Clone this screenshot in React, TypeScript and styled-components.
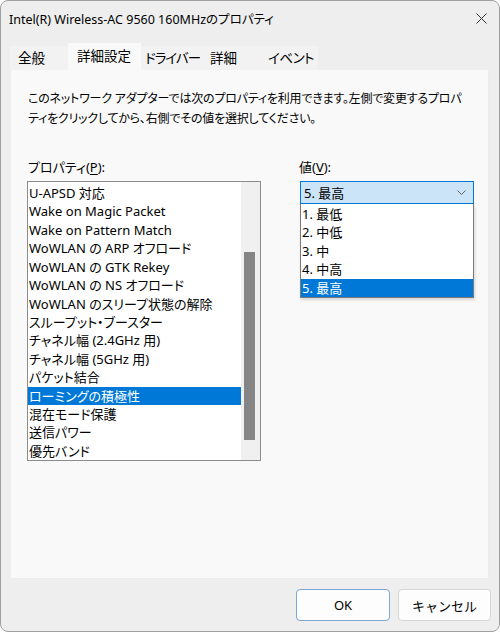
import styled, { createGlobalStyle } from "styled-components";

const Global = createGlobalStyle`
  html, body {
    margin: 0;
    padding: 0;
    background: #ffffff;
  }
  body {
    font-family: "Noto Sans", "Noto Sans CJK JP", sans-serif;
    font-feature-settings: "palt";
    color: #000000;
  }
`;

const Window = styled.div`
  width: 500px;
  height: 632px;
  box-sizing: border-box;
  border: 1px solid #a0a0a0;
  border-radius: 8px;
  background: #eeeeee;
  display: flex;
  flex-direction: column;
  overflow: hidden;
`;

const TitleBar = styled.div`
  height: 34px;
  display: flex;
  align-items: center;
  justify-content: space-between;
  padding: 0 12px 0 8px;
  font-size: 12.5px;
`;

const CloseIcon = () => (
  <svg width="11" height="11" viewBox="0 0 11 11">
    <path d="M0.5 0.5 L10.5 10.5 M10.5 0.5 L0.5 10.5" stroke="#333" strokeWidth="1" fill="none" />
  </svg>
);

const TabRow = styled.div`
  margin-top: 8px;
  padding-left: 9px;
  display: flex;
  align-items: flex-end;
  height: 27px;
`;

const Tab = styled.div<{ $w: number; $pl: number; $ls: number; $active?: boolean }>`
  width: ${(p) => p.$w}px;
  padding-left: ${(p) => p.$pl}px;
  letter-spacing: ${(p) => p.$ls}px;
  box-sizing: border-box;
  height: ${(p) => (p.$active ? 27 : 24)}px;
  line-height: ${(p) => (p.$active ? 26 : 24)}px;
  background: ${(p) => (p.$active ? "#f9f9f9" : "#f2f2f2")};
  font-size: 13.5px;
  white-space: nowrap;
`;

const Panel = styled.div`
  flex: 1;
  margin: 0 10px 0 9px;
  background: #f9f9f9;
  border: 1px solid #ececec;
  border-top: none;
  padding: 19px 16px 0 16px;
  display: flex;
  flex-direction: column;
`;

const Description = styled.p`
  margin: 0 0 28px 1px;
  font-size: 12px;
  line-height: 20px;
  letter-spacing: -0.2px;
  white-space: nowrap;
`;

const Columns = styled.div`
  display: grid;
  grid-template-columns: 234px 37px 176px;
`;

const Column = styled.div`
  display: flex;
  flex-direction: column;
`;

const Label = styled.div`
  font-size: 13px;
  line-height: 18px;
  height: 18px;
  margin: 1px 0 5px;
  padding-left: 1px;
  u {
    text-underline-offset: 2px;
  }
`;

const ListBox = styled.div`
  height: 280px;
  box-sizing: border-box;
  border: 1px solid #8c8c8c;
  background: #ffffff;
  display: flex;
`;

const ListItems = styled.div`
  flex: 1;
  padding-top: 2px;
`;

const Item = styled.div<{ $selected?: boolean }>`
  height: 18.43px;
  line-height: 19px;
  padding-left: 1px;
  font-size: 13px;
  white-space: nowrap;
  background: ${(p) => (p.$selected ? "#0078d7" : "transparent")};
  color: ${(p) => (p.$selected ? "#ffffff" : "#000000")};
`;

const ScrollTrack = styled.div`
  width: 19px;
  background: #f0f0f0;
  position: relative;
`;

const ScrollThumb = styled.div`
  position: absolute;
  left: 3px;
  width: 11px;
  top: 70px;
  height: 188px;
  background: #858585;
`;

const ComboWrap = styled.div`
  position: relative;
  margin-left: 2px;
`;

const Combo = styled.div`
  height: 23px;
  box-sizing: border-box;
  border: 1px solid #0078d7;
  background: #cce4f7;
  display: flex;
  align-items: center;
  justify-content: space-between;
  padding: 0 7px 0 3px;
  font-size: 13px;
`;

const Dropdown = styled.div`
  position: absolute;
  top: 23px;
  left: 0;
  right: 0;
  padding-top: 1px;
  background: #ffffff;
  border: 1px solid #7a7a7a;
  border-top: none;
  box-shadow: 1px 2px 3px rgba(0, 0, 0, 0.15);
`;

const Chevron = () => (
  <svg width="9" height="6" viewBox="0 0 9 6">
    <polyline points="0.5,0.5 4.5,4.5 8.5,0.5" stroke="#606060" strokeWidth="1" fill="none" />
  </svg>
);

const Footer = styled.div`
  height: 52px;
  display: flex;
  justify-content: flex-end;
  align-items: flex-start;
  gap: 8px;
  padding: 10px 8px 0 0;
  box-sizing: border-box;
`;

const Button = styled.button<{ $default?: boolean; $w: number }>`
  width: ${(p) => p.$w}px;
  height: 32px;
  border-radius: 4px;
  background: #fdfdfd;
  border: 1px solid ${(p) => (p.$default ? "#7fa6d0" : "#d6d6d6")};
  font-family: "Noto Sans", "Noto Sans CJK JP", sans-serif;
  font-size: 13px;
  color: #000;
  padding: 0;
`;

const tabs = [
  { label: "全般", w: 58, pl: 8, ls: 0 },
  { label: "詳細設定", w: 73, pl: 9, ls: 0, active: true },
  { label: "ドライバー", w: 59, pl: 4, ls: -1 },
  { label: "詳細", w: 60, pl: 10, ls: 0 },
  { label: "イベント", w: 58, pl: 8, ls: -0.5 },
];

const properties = [
  "U-APSD 対応",
  "Wake on Magic Packet",
  "Wake on Pattern Match",
  "WoWLAN の ARP オフロード",
  "WoWLAN の GTK Rekey",
  "WoWLAN の NS オフロード",
  "WoWLAN のスリープ状態の解除",
  "スループット・ブースター",
  "チャネル幅 (2.4GHz 用)",
  "チャネル幅 (5GHz 用)",
  "パケット結合",
  "ローミングの積極性",
  "混在モード保護",
  "送信パワー",
  "優先バンド",
];

const values = ["1. 最低", "2. 中低", "3. 中", "4. 中高", "5. 最高"];

export default function App() {
  return (
    <>
      <Global />
      <Window>
        <TitleBar>
          <span>Intel(R) Wireless-AC 9560 160MHzのプロパティ</span>
          <CloseIcon />
        </TitleBar>
        <TabRow>
          {tabs.map((t) => (
            <Tab key={t.label} $w={t.w} $pl={t.pl} $ls={t.ls} $active={t.active}>
              {t.label}
            </Tab>
          ))}
        </TabRow>
        <Panel>
          <Description>
            このネットワーク アダプターでは次のプロパティを利用できます。左側で変更するプロパ
            <br />
            ティをクリックしてから、右側でその値を選択してください。
          </Description>
          <Columns>
            <Column>
              <Label>
                プロパティ(<u>P</u>):
              </Label>
              <ListBox>
                <ListItems>
                  {properties.map((p) => (
                    <Item key={p} $selected={p === "ローミングの積極性"}>
                      {p}
                    </Item>
                  ))}
                </ListItems>
                <ScrollTrack>
                  <ScrollThumb />
                </ScrollTrack>
              </ListBox>
            </Column>
            <div />
            <Column>
              <Label>
                値(<u>V</u>):
              </Label>
              <ComboWrap>
                <Combo>
                  <span>5. 最高</span>
                  <Chevron />
                </Combo>
                <Dropdown>
                  {values.map((v) => (
                    <Item key={v} $selected={v === "5. 最高"}>
                      {v}
                    </Item>
                  ))}
                </Dropdown>
              </ComboWrap>
            </Column>
          </Columns>
        </Panel>
        <Footer>
          <Button $default $w={94}>OK</Button>
          <Button $w={93}>キャンセル</Button>
        </Footer>
      </Window>
    </>
  );
}
